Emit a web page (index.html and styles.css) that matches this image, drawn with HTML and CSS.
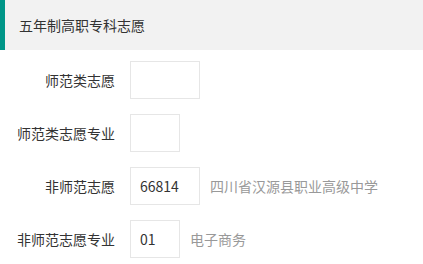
FILE: index.html
```html
<!DOCTYPE html>
<html lang="zh-CN">
<head>
<meta charset="utf-8">
<link rel="stylesheet" href="styles.css">
</head>
<body>
<div class="panel-title">五年制高职专科志愿</div>
<div class="form">
  <div class="row">
    <label class="label">师范类志愿</label>
    <div class="box wide"></div>
  </div>
  <div class="row">
    <label class="label">师范类志愿专业</label>
    <div class="box narrow"></div>
  </div>
  <div class="row">
    <label class="label">非师范志愿</label>
    <div class="box wide">66814</div>
    <span class="hint">四川省汉源县职业高级中学</span>
  </div>
  <div class="row">
    <label class="label">非师范志愿专业</label>
    <div class="box narrow">01</div>
    <span class="hint">电子商务</span>
  </div>
</div>
</body>
</html>
```
FILE: styles.css
```css
html, body {
  margin: 0;
  padding: 0;
  background: #ffffff;
  font-family: "Noto Sans CJK SC", "Microsoft YaHei", sans-serif;
  font-size: 14px;
  color: #333333;
}
.panel-title {
  height: 50px;
  line-height: 50px;
  background: #f2f2f2;
  border-left: 5px solid #009688;
  padding-left: 14px;
  color: #333333;
}
.form {
  display: flex;
  flex-direction: column;
  gap: 15px;
  padding-top: 11px;
}
.row {
  display: flex;
  align-items: center;
  height: 38px;
}
.label {
  width: 115px;
  flex: none;
  text-align: right;
  white-space: nowrap;
  margin-right: 15px;
  color: #333333;
}
.box {
  box-sizing: border-box;
  height: 38px;
  border: 1px solid #e6e6e6;
  padding-left: 9px;
  line-height: 36px;
  color: #333333;
  flex: none;
}
.wide { width: 70px; }
.narrow { width: 50px; }
.hint {
  margin-left: 10px;
  color: #999999;
}
```
